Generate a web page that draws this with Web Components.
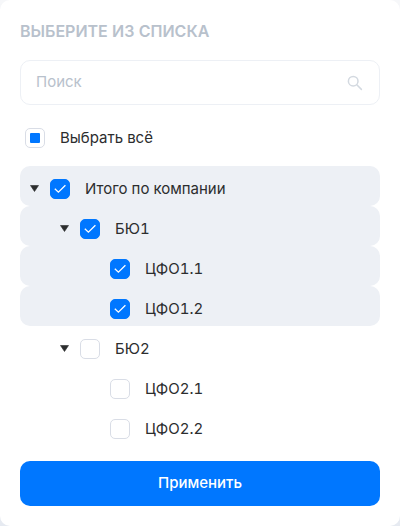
<!DOCTYPE html>
<html lang="ru">
<head>
<meta charset="utf-8">
<meta name="viewport" content="width=device-width, initial-scale=1">
<title>Выберите из списка</title>
<style>
  body {
    margin: 0;
    background: linear-gradient(#f6f7f9, #e6eaf1);
    color: #2c2d2e;
    font: 15px/20px Inter, "Noto Sans", sans-serif;
    font-variant-numeric: tabular-nums;
    --accent: #0077ff;
    --muted: #b8c1cc;
    --line: #edf0f5;
    --box: #d9dde6;
    --selected: #edf0f5;
  }
</style>
</head>
<body>
<list-picker heading="Выберите из списка">
  <search-field slot="search" placeholder="Поиск"></search-field>
  <check-box slot="all" mixed>Выбрать всё</check-box>
  <tree-row level="0" checked expandable>Итого по компании</tree-row>
  <tree-row level="1" checked expandable>БЮ1</tree-row>
  <tree-row level="2" checked>ЦФО1.1</tree-row>
  <tree-row level="2" checked>ЦФО1.2</tree-row>
  <tree-row level="1" expandable>БЮ2</tree-row>
  <tree-row level="2">ЦФО2.1</tree-row>
  <tree-row level="2">ЦФО2.2</tree-row>
  <primary-button slot="action">Применить</primary-button>
</list-picker>

<script>
  class BaseElement extends HTMLElement {
    constructor() {
      super();
      this.attachShadow({ mode: 'open' });
    }
    connectedCallback() {
      this.shadowRoot.innerHTML = '<style>*{box-sizing:border-box}</style>' + this.render();
      this.ready();
    }
    ready() {}
  }

  customElements.define('list-picker', class extends BaseElement {
    render() {
      return `
        <style>
          :host { display: block; }
          section { background: #fff; border-radius: 10px; padding: 20px; }
          h1 {
            margin: 0; color: var(--muted); font-size: 16px; line-height: 22px;
            font-weight: 600; text-transform: uppercase;
          }
          .search { margin-top: 18px; }
          .all { margin-top: 20px; padding: 3px 5px; }
          .tree { margin-top: 15px; }
          .action { margin-top: 15px; }
        </style>
        <section>
          <h1></h1>
          <div class="search"><slot name="search"></slot></div>
          <div class="all"><slot name="all"></slot></div>
          <div class="tree"><slot></slot></div>
          <div class="action"><slot name="action"></slot></div>
        </section>`;
    }
    ready() {
      this.shadowRoot.querySelector('h1').textContent = this.getAttribute('heading');
    }
  });

  customElements.define('search-field', class extends BaseElement {
    render() {
      return `
        <style>
          :host { display: block; }
          div {
            display: flex; align-items: center; gap: 8px; height: 45px;
            padding: 0 16px 0 15px; border: 1px solid var(--line); border-radius: 10px;
          }
          input {
            flex: 1; min-width: 0; padding: 0 0 2px; border: 0; outline: 0;
            background: none; font: inherit; color: inherit;
          }
          input::placeholder { color: var(--muted); opacity: 1; }
          svg { flex: none; color: #d3d9e0; }
        </style>
        <div>
          <input type="search">
          <svg width="16" height="16" viewBox="0 0 16 16" fill="none" stroke="currentColor" stroke-width="1.5" stroke-linecap="round" aria-hidden="true">
            <circle cx="6.2" cy="6.2" r="4.8"/><path d="M9.8 9.8l4.6 4.6"/>
          </svg>
        </div>`;
    }
    ready() {
      const input = this.shadowRoot.querySelector('input');
      input.placeholder = this.getAttribute('placeholder');
      input.setAttribute('aria-label', input.placeholder);
    }
  });

  customElements.define('check-box', class extends BaseElement {
    render() {
      return `
        <style>
          :host { display: block; }
          label { display: flex; align-items: center; gap: 15px; cursor: pointer; }
          .box { display: grid; flex: none; width: 20px; height: 20px; }
          .box > * { grid-area: 1 / 1; }
          input {
            appearance: none; width: 20px; height: 20px; margin: 0;
            border: 1px solid var(--box); border-radius: 5px; background: #fff;
          }
          input:checked { border-color: var(--accent); background: var(--accent); }
          svg { visibility: hidden; pointer-events: none; }
          input:checked ~ .tick, input:indeterminate ~ .dash { visibility: visible; }
        </style>
        <label>
          <span class="box">
            <input type="checkbox">
            <svg class="tick" width="20" height="20" viewBox="0 0 20 20" fill="none" stroke="#fff" stroke-width="1.3"><path d="M4.8 9.8l3.6 3.4 7-7"/></svg>
            <svg class="dash" width="20" height="20" viewBox="0 0 20 20"><rect x="5" y="5" width="10" height="10" rx="1" fill="#0077ff"/></svg>
          </span>
          <span><slot></slot></span>
        </label>`;
    }
    ready() {
      const input = this.shadowRoot.querySelector('input');
      input.checked = this.hasAttribute('checked');
      input.indeterminate = this.hasAttribute('mixed');
    }
  });

  customElements.define('tree-row', class extends BaseElement {
    render() {
      const checked = this.hasAttribute('checked') ? 'checked' : '';
      const arrow = this.hasAttribute('expandable')
        ? `<button type="button" aria-label="Свернуть" aria-expanded="true">
             <svg width="9" height="7" viewBox="0 0 9 7" aria-hidden="true"><path d="M.5 .5h8L4.5 6.5z" fill="#2c2d2e" stroke="#2c2d2e" stroke-width=".6" stroke-linejoin="round"/></svg>
           </button>` : '<span></span>';
      return `
        <style>
          :host {
            display: grid; grid-template-columns: 30px 1fr; align-items: center;
            box-sizing: border-box; height: 40px; border-radius: 10px;
            padding: 6px 10px 0 calc(30px * var(--level));
          }
          :host([checked]) { background: var(--selected); }
          button {
            display: flex; padding: 0 0 1px 10px; border: 0;
            background: none; cursor: pointer;
          }
        </style>
        ${arrow}<check-box ${checked}><slot></slot></check-box>`;
    }
    ready() {
      this.style.setProperty('--level', this.getAttribute('level'));
    }
  });

  customElements.define('primary-button', class extends BaseElement {
    render() {
      return `
        <style>
          :host { display: block; }
          button {
            width: 100%; height: 45px; padding: 0 15px 1px; border: 0; border-radius: 10px;
            background: var(--accent); color: #fff; font: inherit; font-weight: 500; cursor: pointer;
          }
        </style>
        <button type="button"><slot></slot></button>`;
    }
  });
</script>
</body>
</html>
